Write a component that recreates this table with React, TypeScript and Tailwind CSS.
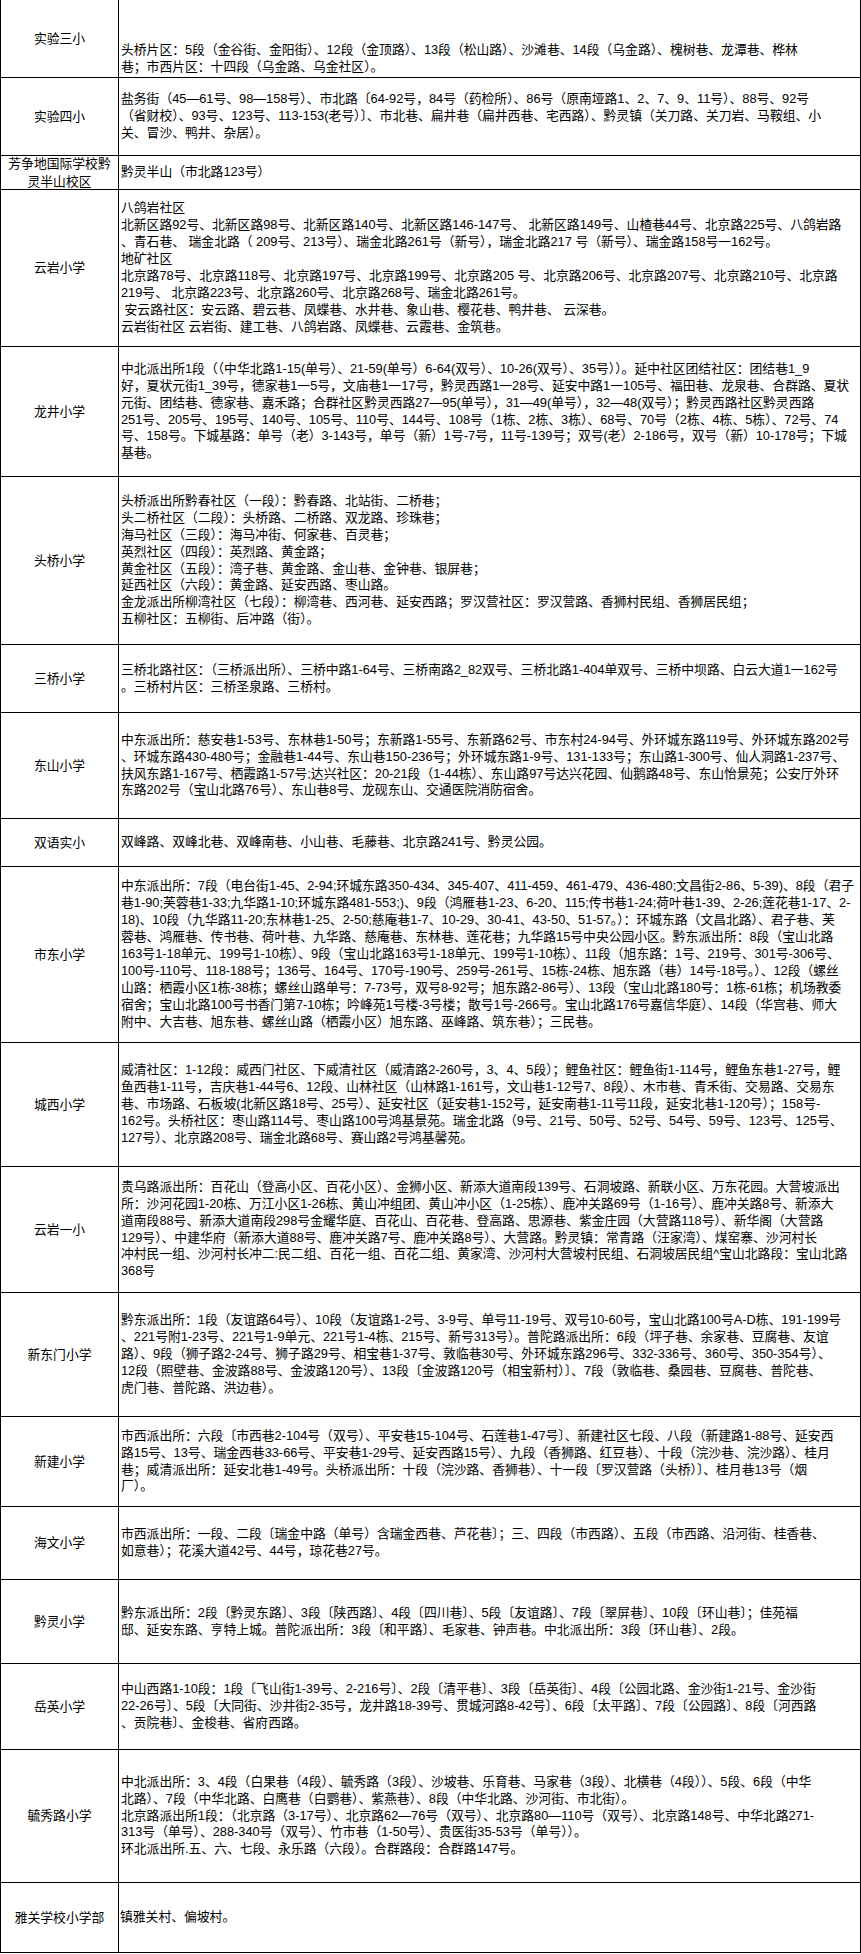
import React from "react";

type Row = {
  label: React.ReactNode;
  h: string;
  lines: string[];
  end?: boolean;
  pl?: string;
};

const rows: Row[] = [
  {
    label: "实验三小",
    h: "h-[78px]",
    end: true,
    lines: [
      "头桥片区：5段（金谷街、金阳街）、12段（金顶路）、13段（松山路）、沙滩巷、14段（乌金路）、槐树巷、龙潭巷、桦林",
      "巷；市西片区：十四段（乌金路、乌金社区）。",
    ],
  },
  {
    label: "实验四小",
    h: "h-[78px]",
    lines: [
      "盐务街（45—61号、98—158号）、市北路〔64-92号，84号（药检所）、86号（原南垭路1、2、7、9、11号）、88号、92号",
      "（省财校）、93号、123号、113-153(老号）〕、市北巷、扁井巷（扁井西巷、宅西路）、黔灵镇（关刀路、关刀岩、马鞍组、小",
      "关、冒沙、鸭井、杂居）。",
    ],
  },
  {
    label: (
      <>
        芳争地国际学校黔
        <br />
        灵半山校区
      </>
    ),
    h: "h-[34px]",
    lines: ["黔灵半山（市北路123号）"],
  },
  {
    label: "云岩小学",
    h: "h-[157px]",
    lines: [
      "八鸽岩社区",
      "北新区路92号、北新区路98号、北新区路140号、北新区路146-147号、 北新区路149号、山楂巷44号、北京路225号、八鸽岩路",
      "、青石巷、 瑞金北路（ 209号、213号）、瑞金北路261号（新号），瑞金北路217 号（新号）、瑞金路158号一162号。",
      "地矿社区",
      "北京路78号、北京路118号、北京路197号、北京路199号、北京路205 号、北京路206号、北京路207号、北京路210号、北京路",
      "219号、 北京路223号、北京路260号、北京路268号、瑞金北路261号。",
      " 安云路社区：安云路、碧云巷、凤蝶巷、水井巷、象山巷、樱花巷、鸭井巷、 云深巷。",
      "云岩街社区 云岩街、建工巷、八鸽岩路、凤蝶巷、云霞巷、金筑巷。",
    ],
  },
  {
    label: "龙井小学",
    h: "h-[130px]",
    lines: [
      "中北派出所1段（（中华北路1-15(单号）、21-59(单号）6-64(双号）、10-26(双号）、35号））。延中社区团结社区：团结巷1_9",
      "好，夏状元街1_39号，德家巷1一5号，文庙巷1一17号，黔灵西路1一28号、延安中路1一105号、福田巷、龙泉巷、合群路、夏状",
      "元街、团结巷、德家巷、嘉禾路；合群社区黔灵西路27—95(单号），31—49(单号），32—48(双号）；黔灵西路社区黔灵西路",
      "251号、205号、195号、140号、105号、110号、144号、108号（1栋、2栋、3栋）、68号、70号（2栋、4栋、5栋）、72号、74",
      "号、158号。下城基路：单号（老）3-143号，单号（新）1号-7号，11号-139号；双号(老）2-186号，双号（新）10-178号；下城",
      "基巷。",
    ],
  },
  {
    label: "头桥小学",
    h: "h-[168px]",
    lines: [
      "头桥派出所黔春社区（一段）：黔春路、北站街、二桥巷；",
      "头二桥社区（二段）：头桥路、二桥路、双龙路、珍珠巷；",
      "海马社区（三段）：海马冲街、何家巷、百灵巷；",
      "英烈社区（四段）：英烈路、黄金路；",
      "黄金社区（五段）：湾子巷、黄金路、金山巷、金钟巷、银屏巷；",
      "延西社区（六段）：黄金路、延安西路、枣山路。",
      "金龙派出所柳湾社区（七段）：柳湾巷、西河巷、延安西路；罗汉营社区：罗汉营路、香狮村民组、香狮居民组；",
      "五柳社区：五柳街、后冲路（街）。",
    ],
  },
  {
    label: "三桥小学",
    h: "h-[68px]",
    lines: [
      "三桥北路社区：（三桥派出所）、三桥中路1-64号、三桥南路2_82双号、三桥北路1-404单双号、三桥中坝路、白云大道1一162号",
      "。三桥村片区：三桥圣泉路、三桥村。",
    ],
  },
  {
    label: "东山小学",
    h: "h-[106px]",
    lines: [
      "中东派出所：慈安巷1-53号、东林巷1-50号；东新路1-55号、东新路62号、市东村24-94号、外环城东路119号、外环城东路202号",
      "、环城东路430-480号；金融巷1-44号、东山巷150-236号；外环城东路1-9号、131-133号；东山路1-300号、仙人洞路1-237号、",
      "扶风东路1-167号、栖霞路1-57号;达兴社区：20-21段（1-44栋）、东山路97号达兴花园、仙鹅路48号、东山怡景苑；公安厅外环",
      "东路202号（宝山北路76号）、东山巷8号、龙砚东山、交通医院消防宿舍。",
    ],
  },
  {
    label: "双语实小",
    h: "h-[48px]",
    lines: ["双峰路、双峰北巷、双峰南巷、小山巷、毛藤巷、北京路241号、黔灵公园。"],
  },
  {
    label: "市东小学",
    h: "h-[176px]",
    lines: [
      "中东派出所：7段（电台街1-45、2-94;环城东路350-434、345-407、411-459、461-479、436-480;文昌街2-86、5-39)、8段（君子",
      "巷1-90;芙蓉巷1-33;九华路1-10;环城东路481-553;)、9段（鸿雁巷1-23、6-20、115;传书巷1-24;荷叶巷1-39、2-26;莲花巷1-17、2-",
      "18)、10段（九华路11-20;东林巷1-25、2-50;慈庵巷1-7、10-29、30-41、43-50、51-57。）：环城东路（文昌北路）、君子巷、芙",
      "蓉巷、鸿雁巷、传书巷、荷叶巷、九华路、慈庵巷、东林巷、莲花巷；九华路15号中央公园小区。黔东派出所：8段（宝山北路",
      "163号1-18单元、199号1-10栋）、9段（宝山北路163号1-18单元、199号1-10栋）、11段（旭东路：1号、219号、301号-306号、",
      "100号-110号、118-188号；136号、164号、170号-190号、259号-261号、15栋-24栋、旭东路（巷）14号-18号。）、12段（螺丝",
      "山路：栖霞小区1栋-38栋；螺丝山路单号：7-73号，双号8-92号；旭东路2-86号）、13段（宝山北路180号：1栋-61栋；机场教委",
      "宿舍；宝山北路100号书香门第7-10栋；吟峰苑1号楼-3号楼；散号1号-266号。宝山北路176号嘉信华庭）、14段（华宫巷、师大",
      "附中、大吉巷、旭东巷、螺丝山路（栖霞小区）旭东路、巫峰路、筑东巷）；三民巷。",
    ],
  },
  {
    label: "城西小学",
    h: "h-[124px]",
    lines: [
      "威清社区：1-12段：威西门社区、下威清社区（威清路2-260号，3、4、5段）；鲤鱼社区：鲤鱼街1-114号，鲤鱼东巷1-27号，鲤",
      "鱼西巷1-11号，吉庆巷1-44号6、12段、山林社区（山林路1-161号，文山巷1-12号7、8段）、木市巷、青禾街、交易路、交易东",
      "巷、市场路、石板坡(北新区路18号、25号）、延安社区（延安巷1-152号，延安南巷1-11号11段，延安北巷1-120号）；158号-",
      "162号。头桥社区：枣山路114号、枣山路100号鸿基景苑。瑞金北路（9号、21号、50号、52号、54号、59号、123号、125号、",
      "127号）、北京路208号、瑞金北路68号、赛山路2号鸿基馨苑。",
    ],
  },
  {
    label: "云岩一小",
    h: "h-[126px]",
    lines: [
      "贵乌路派出所：百花山（登高小区、百花小区）、金狮小区、新添大道南段139号、石洞坡路、新联小区、万东花园。大营坡派出",
      "所：沙河花园1-20栋、万江小区1-26栋、黄山冲组团、黄山冲小区（1-25栋）、鹿冲关路69号（1-16号）、鹿冲关路8号、新添大",
      "道南段88号、新添大道南段298号金耀华庭、百花山、百花巷、登高路、思源巷、紫金庄园（大营路118号）、新华阁（大营路",
      "129号）、中建华府（新添大道88号、鹿冲关路7号、鹿冲关路8号）、大营路。黔灵镇：常青路（汪家湾）、煤窑寨、沙河村长",
      "冲村民一组、沙河村长冲二:民二组、百花一组、百花二组、黄家湾、沙河村大营坡村民组、石洞坡居民组^宝山北路段：宝山北路",
      "368号",
    ],
  },
  {
    label: "新东门小学",
    h: "h-[124px]",
    lines: [
      "黔东派出所：1段（友谊路64号）、10段（友谊路1-2号、3-9号、单号11-19号、双号10-60号，宝山北路100号A-D栋、191-199号",
      "、221号附1-23号、221号1-9单元、221号1-4栋、215号、新号313号）。普陀路派出所：6段（坪子巷、余家巷、豆腐巷、友谊",
      "路）、9段（狮子路2-24号、狮子路29号、相宝巷1-37号、敦临巷30号、外环城东路296号、332-336号、360号、350-354号）、",
      "12段（照壁巷、金波路88号、金波路120号）、13段〔金波路120号（相宝新村）〕、7段（敦临巷、桑园巷、豆腐巷、普陀巷、",
      "虎门巷、普陀路、洪边巷）。",
    ],
  },
  {
    label: "新建小学",
    h: "h-[90px]",
    lines: [
      "市西派出所：六段〔市西巷2-104号（双号）、平安巷15-104号、石莲巷1-47号〕、新建社区七段、八段（新建路1-88号、延安西",
      "路15号、13号、瑞金西巷33-66号、平安巷1-29号、延安西路15号）、九段（香狮路、红豆巷）、十段（浣沙巷、浣沙路）、桂月",
      "巷；威清派出所：延安北巷1-49号。头桥派出所：十段（浣沙路、香狮巷）、十一段〔罗汉营路（头桥）〕、桂月巷13号（烟",
      "厂）。",
    ],
  },
  {
    label: "海文小学",
    h: "h-[73px]",
    lines: [
      "市西派出所：一段、二段〔瑞金中路（单号）含瑞金西巷、芦花巷〕；三、四段（市西路）、五段（市西路、沿河街、桂香巷、",
      "如意巷）；花溪大道42号、44号，琼花巷27号。",
    ],
  },
  {
    label: "黔灵小学",
    h: "h-[84px]",
    lines: [
      "黔东派出所：2段〔黔灵东路〕、3段〔陕西路〕、4段〔四川巷〕、5段〔友谊路〕、7段〔翠屏巷〕、10段〔环山巷〕；佳苑福",
      "邸、延安东路、亨特上城。普陀派出所：3段〔和平路〕、毛家巷、钟声巷。中北派出所：3段〔环山巷〕、2段。",
    ],
  },
  {
    label: "岳英小学",
    h: "h-[86px]",
    lines: [
      "中山西路1-10段：1段〔飞山街1-39号、2-216号〕、2段〔清平巷〕、3段〔岳英街〕、4段〔公园北路、金沙街1-21号、金沙街",
      "22-26号〕、5段〔大同街、沙井街2-35号，龙井路18-39号、贯城河路8-42号〕、6段〔太平路〕、7段〔公园路〕、8段〔河西路",
      "、贡院巷〕、金梭巷、省府西路。",
    ],
  },
  {
    label: "毓秀路小学",
    h: "h-[133px]",
    lines: [
      "中北派出所：3、4段（白果巷（4段）、毓秀路（3段）、沙坡巷、乐育巷、马家巷（3段）、北横巷（4段））、5段、6段（中华",
      "北路）、7段（中华北路、白鹰巷（白鹦巷）、紫燕巷）、8段（中华北路、沙河街、市北街）。",
      "北京路派出所1段：（北京路（3-17号）、北京路62—76号（双号）、北京路80—110号（双号）、北京路148号、中华北路271-",
      "313号（单号）、288-340号（双号）、竹市巷（1-50号）、贵医街35-53号（单号））。",
      "环北派出所.五、六、七段、永乐路（六段）。合群路段：合群路147号。",
    ],
  },
  {
    label: "雅关学校小学部",
    h: "h-[70px]",
    pl: "pl-[1px]",
    lines: ["镇雅关村、偏坡村。"],
  },
];

export default function App() {
  return (
    <div
      className="w-[861px] bg-white text-black text-[12.8px] leading-[16.9px]"
      style={{ fontFamily: '"Liberation Sans", "Noto Sans CJK SC", sans-serif' }}
    >
      <div className="flex flex-col border-l border-r border-black">
        {rows.map((r, i) => (
          <div key={i} className={`flex border-b border-black ${r.h}`}>
            <div className="w-[118px] shrink-0 border-r border-black flex items-center justify-center text-center leading-[17.5px] px-[2px]">
              <div>{r.label}</div>
            </div>
            <div
              className={`flex-1 min-w-0 flex flex-col ${r.end ? "justify-end pb-[1px]" : "justify-center"} ${r.pl ?? "pl-[2px]"}`}
            >
              {r.lines.map((l, j) => (
                <div key={j} className="whitespace-pre">
                  {l}
                </div>
              ))}
            </div>
          </div>
        ))}
      </div>
    </div>
  );
}
